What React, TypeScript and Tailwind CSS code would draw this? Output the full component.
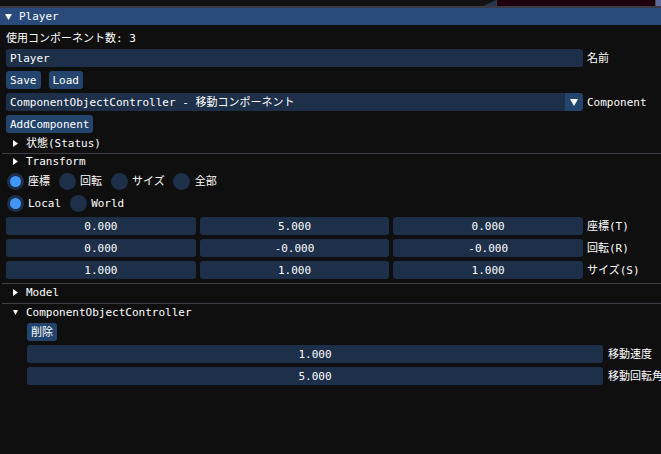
import React from "react";

const FRAME = "bg-[#1d2f49]";
const BTN = "bg-[#23456d]";

function RightArrow() {
  return (
    <svg width="5" height="7" viewBox="0 0 5 7" className="ml-[7px] mr-[8px] shrink-0">
      <polygon points="0,0 5,3.5 0,7" fill="#ffffff" />
    </svg>
  );
}

function DownArrow({ w = 6, h = 5 }: { w?: number; h?: number }) {
  return (
    <svg width={w} height={h} viewBox={`0 0 ${w} ${h}`} className="shrink-0">
      <polygon points={`0,0 ${w},0 ${w / 2},${h}`} fill="#ffffff" />
    </svg>
  );
}

function Separator({ mt }: { mt: string }) {
  return <div className={`h-px bg-[#3e3e47] -ml-[4px] -mr-[6px] ${mt}`} />;
}

function Radio({ label, checked }: { label: string; checked?: boolean }) {
  return (
    <div className="flex items-center h-[18px]">
      <div className="w-[18px] h-[18px] flex items-center justify-center">
        <div className={`w-[17px] h-[17px] rounded-full ${FRAME} flex items-center justify-center`}>
          {checked && <div className="w-[11px] h-[11px] rounded-full bg-[#4296fa]" />}
        </div>
      </div>
      <span className="ml-[4px] whitespace-nowrap">{label}</span>
    </div>
  );
}

function DragRow({ values, label }: { values: string[]; label: string }) {
  return (
    <div className="flex items-center h-[18px]">
      <div className="w-[577px] flex gap-[4px]">
        {values.map((v, i) => (
          <div
            key={i}
            className={`flex-1 h-[18px] rounded-[3px] ${FRAME} flex items-center justify-center`}
          >
            {v}
          </div>
        ))}
      </div>
      <span className="ml-[4px] whitespace-nowrap">{label}</span>
    </div>
  );
}

export default function App() {
  return (
    <div className="w-[661px] h-[454px] overflow-hidden bg-[#0f0f0f] text-white text-[11px] leading-[13px] font-['DejaVu_Sans_Mono','Noto_Sans_CJK_JP',monospace]">
      {/* top strip of the window behind */}
      <div className="flex h-[6px] bg-[#121212]">
        <div className="flex-1 flex justify-end">
          <svg width="13" height="6" viewBox="0 0 13 6">
            <polygon points="13,0 13,6 0,6" fill="#26374f" />
          </svg>
        </div>
        <div className="w-px bg-[#3a3a44]" />
        <div className="w-[158px] bg-[#1f0010]" />
        <div className="w-px bg-[#4a4a55]" />
        <div className="w-[5px] bg-[#5b6b9b]" />
      </div>
      <div className="h-[2px] bg-[#3b3b45]" />

      {/* title bar */}
      <div className="h-[17px] bg-[#294a7a] flex items-center pl-[5px]">
        <DownArrow w={7} h={6} />
        <span className="ml-[7px]">Player</span>
      </div>

      {/* content */}
      <div className="flex flex-col px-[6px] pt-[7px]">
        <div className="h-[13px] whitespace-nowrap">使用コンポーネント数: 3</div>

        <div className="mt-[4px] flex items-center h-[18px]">
          <div className={`w-[577px] h-[18px] rounded-[3px] ${FRAME} flex items-center px-[4px]`}>
            Player
          </div>
          <span className="ml-[4px]">名前</span>
        </div>

        <div className="mt-[4px] flex items-center h-[18px] gap-[8px]">
          <div className={`h-[18px] rounded-[3px] ${BTN} flex items-center px-[4px]`}>Save</div>
          <div className={`h-[18px] rounded-[3px] ${BTN} flex items-center px-[4px]`}>Load</div>
        </div>

        <div className="mt-[4px] flex items-center h-[18px]">
          <div className="w-[577px] h-[18px] flex">
            <div className={`flex-1 h-[18px] rounded-l-[3px] ${FRAME} flex items-center px-[4px] whitespace-nowrap`}>
              ComponentObjectController - 移動コンポーネント
            </div>
            <div className={`w-[18px] h-[18px] rounded-r-[3px] ${BTN} flex items-center justify-center`}>
              <DownArrow w={8} h={7} />
            </div>
          </div>
          <span className="ml-[4px]">Component</span>
        </div>

        <div className="mt-[4px] flex items-center h-[18px]">
          <div className={`h-[18px] rounded-[3px] ${BTN} flex items-center px-[4px]`}>AddComponent</div>
        </div>

        <div className="mt-[4px] h-[13px] flex items-center">
          <RightArrow />
          <span>状態(Status)</span>
        </div>

        <Separator mt="mt-[3px]" />

        <div className="mt-[1px] h-[13px] flex items-center">
          <RightArrow />
          <span>Transform</span>
        </div>

        <div className="mt-[4px] flex items-center gap-[8px]">
          <Radio label="座標" checked />
          <Radio label="回転" />
          <Radio label="サイズ" />
          <Radio label="全部" />
        </div>

        <div className="mt-[4px] flex items-center gap-[8px]">
          <Radio label="Local" checked />
          <Radio label="World" />
        </div>

        <div className="mt-[5px] flex flex-col gap-[4px]">
          <DragRow values={["0.000", "5.000", "0.000"]} label="座標(T)" />
          <DragRow values={["0.000", "-0.000", "-0.000"]} label="回転(R)" />
          <DragRow values={["1.000", "1.000", "1.000"]} label="サイズ(S)" />
        </div>

        <Separator mt="mt-[4px]" />

        <div className="mt-[2px] h-[13px] flex items-center">
          <RightArrow />
          <span>Model</span>
        </div>

        <Separator mt="mt-[4px]" />

        <div className="mt-[2px] h-[13px] flex items-center">
          <div className="ml-[7px] mr-[8px]">
            <DownArrow w={5} h={5} />
          </div>
          <span>ComponentObjectController</span>
        </div>

        <div className="ml-[21px] flex flex-col">
          <div className="mt-[4px] flex items-center h-[18px]">
            <div className={`h-[18px] rounded-[3px] ${BTN} flex items-center px-[4px]`}>削除</div>
          </div>
          <div className="mt-[4px] flex items-center h-[18px]">
            <div className={`w-[576px] shrink-0 h-[18px] rounded-[3px] ${FRAME} flex items-center justify-center`}>
              1.000
            </div>
            <span className="ml-[5px] whitespace-nowrap">移動速度</span>
          </div>
          <div className="mt-[4px] flex items-center h-[18px]">
            <div className={`w-[576px] shrink-0 h-[18px] rounded-[3px] ${FRAME} flex items-center justify-center`}>
              5.000
            </div>
            <span className="ml-[5px] whitespace-nowrap">移動回転角</span>
          </div>
        </div>
      </div>
    </div>
  );
}
